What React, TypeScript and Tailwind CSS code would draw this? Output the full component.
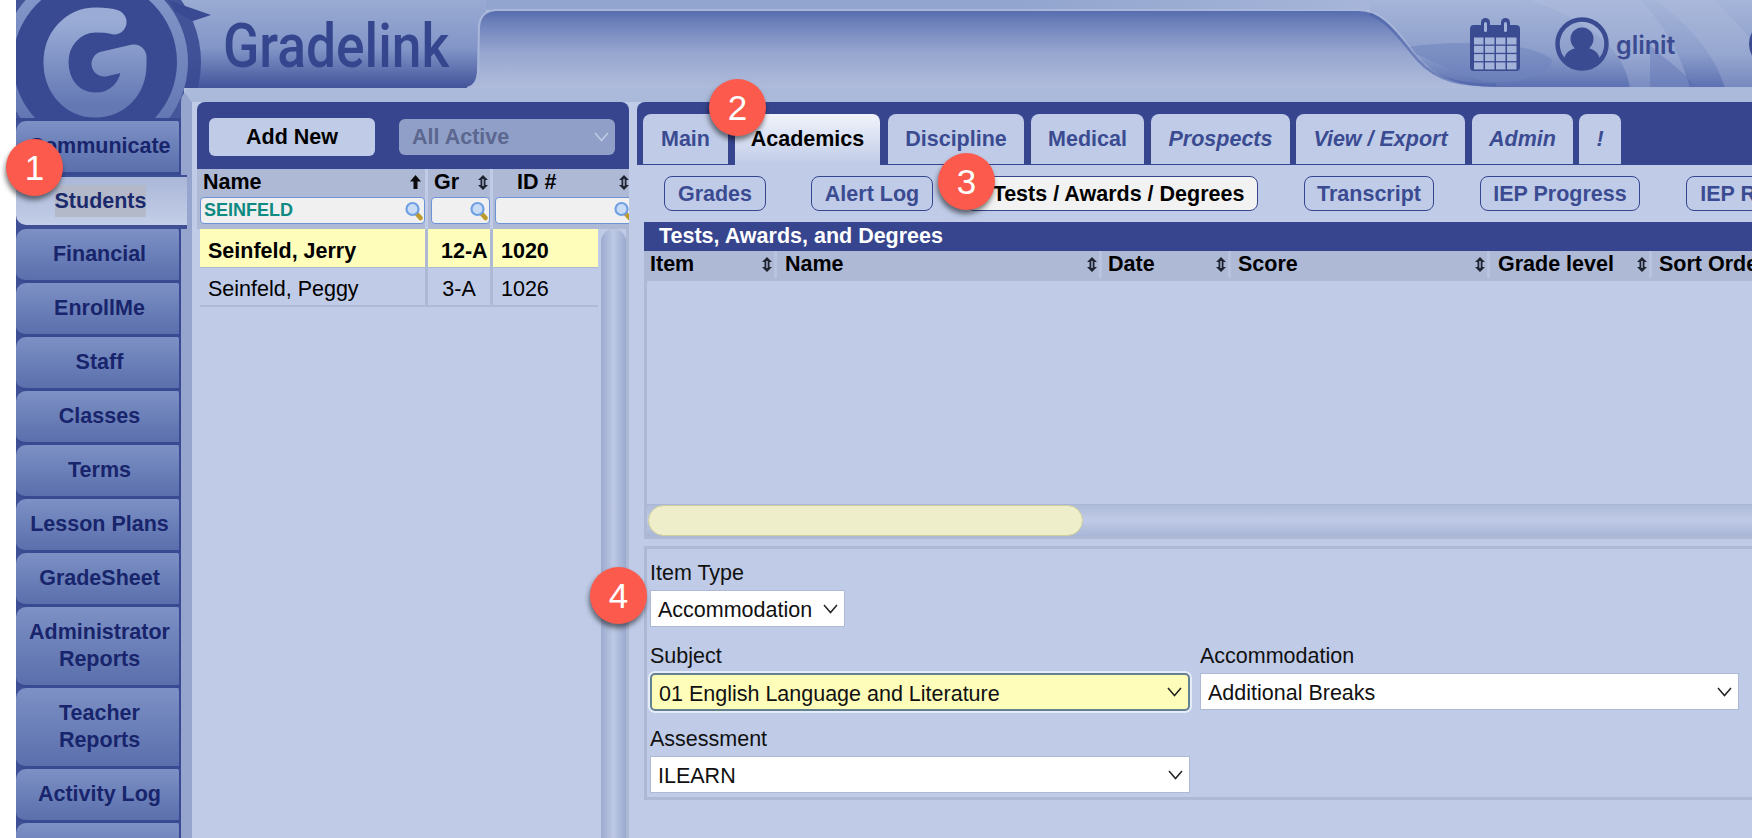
import React from "react";

const NAV: { label: string[]; tall?: boolean; active?: boolean }[] = [
  { label: ["Communicate"] },
  { label: ["Students"], active: true },
  { label: ["Financial"] },
  { label: ["EnrollMe"] },
  { label: ["Staff"] },
  { label: ["Classes"] },
  { label: ["Terms"] },
  { label: ["Lesson Plans"] },
  { label: ["GradeSheet"] },
  { label: ["Administrator", "Reports"], tall: true },
  { label: ["Teacher", "Reports"], tall: true },
  { label: ["Activity Log"] },
  { label: [""] },
];

const TABS = [
  { t: "Main", c: "w-[85px] ml-[6px]" },
  { t: "Academics", c: "w-[147px] ml-[6px]", active: true },
  { t: "Discipline", c: "w-[136px] ml-[7px]" },
  { t: "Medical", c: "w-[113px] ml-[7px]" },
  { t: "Prospects", c: "w-[139px] ml-[7px] italic" },
  { t: "View / Export", c: "w-[169px] ml-[6px] italic" },
  { t: "Admin", c: "w-[101px] ml-[7px] italic" },
  { t: "!", c: "w-[42px] ml-[6px] italic" },
];

const SUBTABS = [
  { t: "Grades", c: "w-[102px] ml-[27px]" },
  { t: "Alert Log", c: "w-[122px] ml-[45px]" },
  { t: "Tests / Awards / Degrees", c: "w-[292px] ml-[33px] pl-[13px]", active: true },
  { t: "Transcript", c: "w-[130px] ml-[46px]" },
  { t: "IEP Progress", c: "w-[160px] ml-[46px]" },
  { t: "IEP Reports", c: "w-[150px] ml-[46px]" },
];

const COLUMNS = [
  { t: "Item", c: "w-[133px] pl-[6px] pr-[2px]" },
  { t: "Name", c: "w-[325px] pl-[8px] pr-[2px]" },
  { t: "Date", c: "w-[129px] pl-[6px] pr-[2px]" },
  { t: "Score", c: "w-[259px] pl-[7px] pr-[2px]" },
  { t: "Grade level", c: "w-[162px] pl-[8px] pr-[2px]" },
  { t: "Sort Order", c: "w-[120px] pl-[7px]" },
];

function SortIcon() {
  return (
    <svg width="10" height="15" viewBox="0 0 10 15" className="shrink-0">
      <path d="M5 0 L10 5 H7.5 V10 H10 L5 15 L0 10 H2.5 V5 H0 Z" fill="#1f2430" />
      <path d="M4.200 4 H5.800 V11 H4.200 Z" fill="#9aa6c6" />
    </svg>
  );
}

function UpIcon() {
  return (
    <svg width="11" height="14" viewBox="0 0 11 14" className="shrink-0">
      <path d="M5.500 0 L11 6.500 H7.500 V14 H3.500 V6.500 H0 Z" fill="#0c0c0c" />
    </svg>
  );
}

function Magnifier() {
  return (
    <svg width="18" height="20" viewBox="0 0 18 20" className="shrink-0">
      <path d="M11 12 L15.500 17" stroke="#bd9a2b" strokeWidth="4.500" strokeLinecap="round" />
      <circle cx="7.500" cy="8" r="6" fill="#c9dcf6" stroke="#6f9fe3" strokeWidth="2.200" />
    </svg>
  );
}

function Chevron({ color = "#222" }: { color?: string }) {
  return (
    <svg width="15" height="10" viewBox="0 0 15 10" className="shrink-0">
      <path d="M1 1 L7.500 8.500 L14 1" fill="none" stroke={color} strokeWidth="1.500" />
    </svg>
  );
}

function Field({ text, className }: { text: string; className: string }) {
  return (
    <div className={"flex items-center justify-between border pl-[7px] pr-[6px] text-[21.5px] text-[#111] " + className}>
      <span className="pt-[4px]">{text}</span>
      <Chevron />
    </div>
  );
}

function Banner() {
  return (
    <svg width="1752" height="118" viewBox="0 0 1752 118" className="absolute left-0 top-0">
      <defs>
        <linearGradient id="plate" x1="0" y1="0" x2="0" y2="1">
          <stop offset="0" stopColor="#9aabd3" />
          <stop offset="0.55" stopColor="#8295c7" />
          <stop offset="1" stopColor="#43539b" />
        </linearGradient>
        <linearGradient id="rightbg" x1="0" y1="0" x2="0" y2="1">
          <stop offset="0" stopColor="#a6b5d9" />
          <stop offset="0.6" stopColor="#8c9ecb" />
          <stop offset="1" stopColor="#5c70b1" />
        </linearGradient>
        <linearGradient id="strip" x1="0" y1="0" x2="1" y2="0">
          <stop offset="0" stopColor="#92a5ce" />
          <stop offset="0.6" stopColor="#92a5ce" />
          <stop offset="1" stopColor="#a6b5d9" />
        </linearGradient>
        <linearGradient id="inset" x1="0" y1="0" x2="0" y2="1">
          <stop offset="0" stopColor="#566bad" />
          <stop offset="0.2" stopColor="#7185bd" />
          <stop offset="0.55" stopColor="#96a6cf" />
          <stop offset="1" stopColor="#b0bcdb" />
        </linearGradient>
        <linearGradient id="ring" x1="0" y1="0" x2="0" y2="1">
          <stop offset="0" stopColor="#8a9dcd" />
          <stop offset="1" stopColor="#5a6eae" />
        </linearGradient>
        <linearGradient id="gfill" x1="0" y1="0" x2="0" y2="1">
          <stop offset="0" stopColor="#9aacd6" />
          <stop offset="1" stopColor="#6478b4" />
        </linearGradient>
      </defs>
      <rect x="0" y="0" width="1752" height="118" fill="#b3bfde" />
      <rect x="16" y="0" width="470" height="88" fill="url(#plate)" />
      <rect x="1370" y="0" width="382" height="88" fill="url(#rightbg)" />
      <rect x="486" y="0" width="884" height="10" fill="url(#strip)" />
      <path d="M1530 0 C1600 25 1625 55 1630 88 L1690 88 C1680 50 1660 20 1640 0 Z" fill="#b2bfdf" opacity="0.35" />
      <path d="M1400 48 C1450 40 1530 40 1552 60 C1550 78 1510 86 1480 80 C1450 72 1430 58 1400 48 Z" fill="#6f83bd" opacity="0.55" />
      <path d="M1655 0 L1715 0 L1752 40 L1752 88 L1725 88 C1715 55 1690 25 1655 0 Z" fill="#b2bfdf" opacity="0.3" />
      <path d="M1650 45 C1665 60 1690 75 1695 88 L1650 88 Z" fill="#566ab0" opacity="0.35" />
      <path
        d="M467 88 Q477 86 478 72 L479 27 Q480 10 498 10 L1358 10 C1384 10 1396 30 1416 56 C1436 80 1460 88 1496 88 Z"
        fill="url(#inset)"
      />
      <path
        d="M467 88 Q477 86 478 72 L479 27 Q480 10 498 10 L1358 10 C1384 10 1396 30 1416 56 C1436 80 1460 88 1496 88 L1752 88"
        fill="none"
        stroke="#a9b7da"
        strokeWidth="2"
      />
      <path d="M1370 14 C1392 24 1402 42 1418 60 C1438 82 1462 85 1496 85" fill="none" stroke="#4c62a9" strokeWidth="3" opacity="0.6" />
      <path d="M168 0 L211 15 L193 21 L176 12 Z" fill="#3a4a92" />
      <circle cx="95" cy="62" r="106" fill="#3a4a92" opacity="0.9" />
      <circle cx="95" cy="62" r="93" fill="url(#ring)" />
      <circle cx="95" cy="62" r="82" fill="#3a4a92" />
      <path
        d="M114 22 C108 20 100 20 96 20 C72 20 56 40 56 62 C56 86 72 105 95 105 C118 105 134 88 134 64 L134 57 L104 64"
        fill="none"
        stroke="url(#gfill)"
        strokeWidth="25"
        strokeLinecap="round"
        strokeLinejoin="round"
      />
      <rect x="0" y="0" width="16" height="118" fill="#ffffff" />
      <rect x="184" y="88" width="1568" height="30" fill="#b3bfde" />
    </svg>
  );
}

function Calendar() {
  const cells = [];
  for (let r = 0; r < 4; r++) {
    for (let c = 0; c < 4; c++) {
      cells.push(<rect key={r + "-" + c} x={4 + c * 11} y={20.5 + r * 8.3} width="9.5" height="7" fill="#a3b2d8" />);
    }
  }
  return (
    <svg width="50" height="54" viewBox="0 0 50 54" className="shrink-0">
      <rect x="0" y="8" width="50" height="46" rx="4" fill="#3b4b92" />
      {cells}
      <rect x="11" y="1" width="9" height="16" rx="4.500" fill="#3b4b92" />
      <rect x="31" y="1" width="9" height="16" rx="4.500" fill="#3b4b92" />
      <rect x="14" y="5" width="3" height="10" rx="1.500" fill="#a3b2d8" />
      <rect x="34" y="5" width="3" height="10" rx="1.500" fill="#a3b2d8" />
    </svg>
  );
}

function Avatar() {
  return (
    <svg width="54" height="54" viewBox="0 0 54 54" className="shrink-0">
      <circle cx="27" cy="27" r="24.500" fill="none" stroke="#3b4b92" strokeWidth="4.500" />
      <circle cx="27" cy="22" r="11.500" fill="#3b4b92" />
      <path d="M9 43 C10 35 16 32 21 31 C24 34 30 34 33 31 C38 32 44 35 45 43 C40 49 33 52 27 52 C21 52 14 49 9 43 Z" fill="#3b4b92" />
    </svg>
  );
}

function Badge({ n, className }: { n: string; className: string }) {
  return (
    <div
      className={
        "absolute z-20 flex h-[57px] w-[57px] items-center justify-center rounded-full bg-[#fb5a4c] text-[35px] leading-none text-white shadow-[-1px_4px_5px_rgba(0,0,0,0.5)] " +
        className
      }
    >
      {n}
    </div>
  );
}

export default function App() {
  return (
    <div className="relative h-[838px] w-[1752px] overflow-hidden bg-white font-['Liberation_Sans',Arial,sans-serif]">
      <header className="relative flex h-[88px]">
        <Banner />
        <div className="relative ml-[223px] mt-[12px] origin-left scale-x-[0.86] font-['Roboto',sans-serif] text-[62px] font-medium leading-[68px] text-[#35468e] blur-[0.6px]">
          Gradelink
        </div>
        <div className="absolute left-[1470px] top-[17px] flex items-center">
          <Calendar />
          <div className="ml-[35px]">
            <Avatar />
          </div>
          <span className="ml-[7px] mt-[3px] font-['Inter',sans-serif] text-[25px] font-semibold text-[#3b4b92]">glinit</span>
        </div>
        <div className="absolute left-[1749px] top-[20px] h-[48px] w-[48px] rounded-full border-[4px] border-[#3b4b92]" />
      </header>

      <div className="relative flex h-[750px]">
        <aside className="ml-4 w-[165px] shrink-0 pt-[30px]">
          <div className="h-[3px] bg-[#3a4a92]" />
          <nav className="flex flex-col bg-[#3f4f96]">
            {NAV.map((n, i) =>
              n.active ? (
                <div key={i} className="relative z-10 flex h-[54px] w-[171px] items-start bg-[#3f4f96]">
                  <div className="mt-[2px] flex h-[48px] w-full items-center justify-center rounded-l-[10px] bg-gradient-to-b from-[#aab7d8] to-[#c3cee7] pl-[2px] pr-[4px] text-[21.5px] font-bold text-[#1b2a6c]">
                    <span className="bg-[#b4b9ca] px-0">{n.label[0]}</span>
                  </div>
                </div>
              ) : (
                <div
                  key={i}
                  className={
                    "flex flex-col items-center justify-center rounded-l-[10px] rounded-tr-[3px] border-r-2 border-b-[3px] border-[#3a4a92] bg-gradient-to-b from-[#7d91c5] to-[#5a6fac] pl-[4px] text-center text-[21.5px] font-bold leading-[27px] text-[#18246b] " +
                    (n.tall ? "h-[81px]" : "h-[54px]")
                  }
                >
                  {n.label.map((l) => (
                    <span key={l}>{l}</span>
                  ))}
                </div>
              )
            )}
          </nav>
        </aside>

        <main className="flex min-w-0 flex-1 rounded-tl-[14px] border-t-[14px] border-l-[11px] border-t-[#abb9da] border-l-[#95a5cd] bg-[#bfcbe7] pl-[5px]">
          {/* student list */}
          <section className="flex w-[432px] shrink-0 flex-col">
            <div className="flex h-[67px] rounded-t-[8px] bg-[#37458e] pl-[12px] pt-[16px]">
              <div className="flex h-[38px] w-[166px] items-center justify-center rounded-[6px] bg-[#bfcbe7] text-[21.5px] font-bold text-black">
                Add New
              </div>
              <div className="ml-[24px] mt-[1px] flex h-[36px] w-[216px] items-center justify-between rounded-[6px] bg-[#8f9fc8] pl-[13px] pr-[6px] text-[21.5px] font-bold text-[#5c678f]">
                <span>All Active</span>
                <Chevron color="#bfcbe7" />
              </div>
            </div>

            <div className="grid h-[60px] grid-cols-[228px_62px_136px] grid-rows-[28px_32px] gap-x-[3px] overflow-hidden text-[21.5px] font-bold text-black">
              <div className="flex items-center justify-between bg-[#aeb9d6] pb-[2px] pl-[6px] pr-[4px]">
                <span>Name</span>
                <UpIcon />
              </div>
              <div className="flex items-center justify-between bg-[#aeb9d6] pb-[2px] pl-[6px] pr-[2px]">
                <span>Gr</span>
                <SortIcon />
              </div>
              <div className="flex items-center justify-between bg-[#aeb9d6] pb-[2px] pl-[24px]">
                <span>ID #</span>
                <SortIcon />
              </div>
              <div className="bg-[#aeb9d6] pl-[3px]">
                <div className="flex h-[27px] items-center justify-between rounded-[4px] border border-[#6b93d6] bg-[#f0f0f0] pl-[3px] pr-[1px] text-[18px] text-[#0e8a82]">
                  <span>SEINFELD</span>
                  <Magnifier />
                </div>
              </div>
              <div className="bg-[#aeb9d6] pl-[3px]">
                <div className="flex h-[27px] items-center justify-end rounded-[4px] border border-[#6b93d6] bg-[#f0f0f0] pr-[1px]">
                  <Magnifier />
                </div>
              </div>
              <div className="bg-[#aeb9d6] pl-[2px]">
                <div className="flex h-[27px] w-[140px] items-center justify-end rounded-[4px] border border-[#6b93d6] bg-[#f0f0f0] pr-[2px]">
                  <Magnifier />
                </div>
              </div>
            </div>

            <div className="flex min-h-0 flex-1">
              <div className="w-[401px] shrink-0 pl-[3px] text-[21.5px] text-black">
                <div className="grid h-[39px] grid-cols-[225px_62px_105px] gap-x-[3px] bg-[#aeb9d6] pb-[3px] font-bold">
                  <div className="bg-[#fefdb9] pl-[8px] pt-[6px]">Seinfeld, Jerry</div>
                  <div className="whitespace-nowrap bg-[#fefdb9] pl-[13px] pt-[6px]">12-A</div>
                  <div className="bg-[#fefdb9] pl-[8px] pt-[6px]">1020</div>
                </div>
                <div className="grid h-[39px] grid-cols-[225px_62px_105px] gap-x-[3px] bg-[#aeb9d6] pb-[3px]">
                  <div className="bg-[#bfcbe7] pl-[8px] pt-[5px]">Seinfeld, Peggy</div>
                  <div className="bg-[#bfcbe7] pt-[5px] text-center">3-A</div>
                  <div className="bg-[#bfcbe7] pl-[8px] pt-[5px]">1026</div>
                </div>
              </div>
              <div className="ml-[3px] h-full w-[25px] rounded-t-full bg-gradient-to-r from-[#9dabcf] via-[#bdc9e5] to-[#9aa9ce]" />
              <div className="w-[3px] bg-[#aeb9d6]" />
            </div>
          </section>

          {/* detail */}
          <section className="ml-[8px] min-w-0 flex-1 overflow-hidden">
            <div className="flex h-[63px] rounded-tl-[8px] bg-[#37458e] pt-[12px]">
              {TABS.map((t) =>
                t.active ? (
                  <div
                    key={t.t}
                    className={
                      "flex h-[51px] shrink-0 items-center justify-center rounded-t-[8px] border-x border-[#37458e] bg-gradient-to-b from-[#f1f4fb] to-[#bfcbe7] pb-[1px] text-[21.5px] font-bold text-black " +
                      t.c
                    }
                  >
                    {t.t}
                  </div>
                ) : (
                  <div
                    key={t.t}
                    className={
                      "flex h-[50px] shrink-0 items-center justify-center rounded-t-[8px] bg-[#bfcbe7] text-[21.5px] font-bold text-[#3b4b92] " +
                      t.c
                    }
                  >
                    {t.t}
                  </div>
                )
              )}
            </div>

            <div className="mt-[11px] flex h-[35px]">
              {SUBTABS.map((t) => (
                <div
                  key={t.t}
                  className={
                    "flex shrink-0 items-center justify-center rounded-[8px] border border-[#37458e] pt-[2px] text-[21.5px] font-bold " +
                    (t.active ? "bg-[#f2f2f2] text-black " : "text-[#3b4b92] ") +
                    t.c
                  }
                >
                  {t.t}
                </div>
              ))}
            </div>

            <div className="ml-[7px] mt-[11px]">
              <div className="flex h-[29px] items-center bg-[#37458e] pl-[15px] text-[21.5px] font-bold text-white">
                Tests, Awards, and Degrees
              </div>
              <div className="flex h-[30px] bg-[#aeb9d6] pb-[3px] text-[21.5px] font-bold text-black">
                {COLUMNS.map((c) => (
                  <div key={c.t} className={"flex shrink-0 items-center justify-between whitespace-nowrap border-r-[3px] border-[#b8c3df] " + c.c}>
                    <span>{c.t}</span>
                    <SortIcon />
                  </div>
                ))}
              </div>
              <div className="border-b-[3px] border-l-[3px] border-[#aeb9d6]">
                <div className="h-[223px]" />
                <div className="h-[32px] border-y border-[#aab6d6] bg-gradient-to-b from-[#aebbd9] via-[#bfcbe7] to-[#aab7d7]">
                  <div className="ml-[1px] h-[31px] w-[435px] rounded-full border border-[#cfcf9e] bg-[#eeeecb]" />
                </div>
              </div>

              <div className="mt-[7px] h-[254px] border-[3px] border-r-0 border-[#aeb9d6] pl-[3px] pt-[12px] text-[21.5px] text-[#111]">
                <div className="h-[24px] leading-[24px]">Item Type</div>
                <Field text="Accommodation" className="mt-[5px] h-[37px] w-[195px] border-[#aeb9d6] bg-white" />
                <div className="mt-[17px] flex gap-[10px]">
                  <div className="w-[540px]">
                    <div className="h-[24px] leading-[24px]">Subject</div>
                    <Field
                      text="01 English Language and Literature"
                      className="mt-[5px] h-[38px] rounded-[5px] border-2 border-[#64818f] bg-[#fefdb9] shadow-[0_0_0_2px_#e4ecf9]"
                    />
                  </div>
                  <div className="w-[539px]">
                    <div className="h-[24px] leading-[24px]">Accommodation</div>
                    <Field text="Additional Breaks" className="mt-[5px] h-[37px] border-[#aeb9d6] bg-white" />
                  </div>
                </div>
                <div className="mt-[16px] h-[24px] leading-[24px]">Assessment</div>
                <Field text="ILEARN" className="mt-[5px] h-[37px] w-[540px] border-[#aeb9d6] bg-white" />
              </div>
            </div>
          </section>
        </main>
      </div>

      <Badge n="1" className="left-[6px] top-[139px]" />
      <Badge n="2" className="left-[709px] top-[79px]" />
      <Badge n="3" className="left-[938px] top-[153px]" />
      <Badge n="4" className="left-[590px] top-[567px]" />
    </div>
  );
}
